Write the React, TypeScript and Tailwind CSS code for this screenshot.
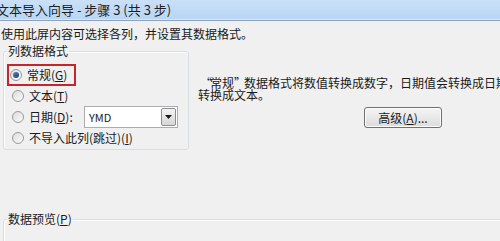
import React from "react";

function Radio({ checked }: { checked?: boolean }) {
  return (
    <span className="flex h-[12px] w-[12px] shrink-0 items-center justify-center rounded-full border border-[#9a9a9a] bg-gradient-to-br from-[#dcdcdc] to-[#fbfbfb]">
      {checked && (
        <span className="h-[6px] w-[6px] rounded-full bg-gradient-to-br from-[#5b86b8] to-[#1c3f6e]" />
      )}
    </span>
  );
}

export default function App() {
  return (
    <div
      className="h-[241px] w-[500px] overflow-hidden bg-[#f0f0f0] text-[12px] text-[#1a1a1a]"
      style={{ fontFamily: '"Noto Sans CJK SC", "Noto Sans", sans-serif' }}
    >
      {/* Title bar */}
      <div className="flex h-[21px] items-center border-b border-[#8ea2ba] bg-gradient-to-b from-[#c9e0f7] to-[#b9d6f5] shadow-[inset_0_-1px_0_#d8e6f3]">
        <span className="-ml-[4px] whitespace-nowrap text-[13px] leading-[16px] text-[#1e1e1e]">
          文本导入向导 - 步骤 3 (共 3 步)
        </span>
      </div>

      {/* Description */}
      <div className="mt-[5px] whitespace-nowrap pl-[1px] leading-[15px]">
        使用此屏内容可选择各列，并设置其数据格式。
      </div>

      <div className="mt-[3px] flex">
        {/* Column data format group */}
        <fieldset className="ml-[3px] w-[186px] shrink-0 rounded-[3px] border border-[#d5dfe5] pb-[1px] shadow-[inset_1px_1px_0_#ffffff]">
          <legend className="ml-[3px] px-[1px] leading-[14px]">列数据格式</legend>
          <div className="mt-[6px] flex flex-col">
            <div className="ml-[3px] flex h-[22px] w-[69px] items-center gap-[5px] border-2 border-[#c4262b] pl-[1px]">
              <Radio checked />
              <span className="whitespace-nowrap leading-[14px]">
                常规(<span className="underline">G</span>)
              </span>
            </div>
            <div className="flex h-[20px] items-center gap-[5px] pl-[8px]">
              <Radio />
              <span className="whitespace-nowrap leading-[14px]">
                文本(<span className="underline">T</span>)
              </span>
            </div>
            <div className="flex h-[22px] items-center pl-[8px]">
              <Radio />
              <span className="ml-[5px] w-[55px] whitespace-nowrap leading-[14px]">
                日期(<span className="underline">D</span>):
              </span>
              <div className="flex h-[22px] w-[94px] shrink-0 items-center border border-[#abadb3] bg-white">
                <span className="flex-1 pl-[4px] text-[11px] leading-[14px]">YMD</span>
                <span className="mr-[1px] flex h-[18px] w-[15px] items-center justify-center rounded-[2px] border border-[#8d8d8d] bg-gradient-to-b from-[#f4f4f4] to-[#d6d6d6]">
                  <svg width="7" height="4" viewBox="0 0 7 4">
                    <path d="M0 0 H7 L3.5 4 Z" fill="#1a1a1a" />
                  </svg>
                </span>
              </div>
            </div>
            <div className="flex h-[20px] items-center gap-[5px] pl-[8px]">
              <Radio />
              <span className="whitespace-nowrap leading-[14px]">
                不导入此列(跳过)(<span className="underline">I</span>)
              </span>
            </div>
          </div>
        </fieldset>

        {/* Description and advanced button */}
        <div className="ml-[11px] flex flex-col pt-[33px]">
          <div className="flex flex-col whitespace-nowrap leading-[12px]">
            <span>
              <span className="inline-block w-[10px] text-right">“</span>常规<span className="inline-block w-[10px] text-left">”</span>数据格式将数值转换成数字，日期值会转换成日期，其余数据则
            </span>
            <span className="-ml-[2px]">转换成文本。</span>
          </div>
          <button className="ml-[164px] mt-[6px] flex h-[21px] w-[78px] items-center justify-center rounded-[3px] border border-[#707070] bg-gradient-to-b from-[#f5f5f5] to-[#dcdcdc] text-[12px] leading-[14px] shadow-[inset_0_0_0_1px_#fcfcfc]">
            高级(<span className="underline">A</span>)...
          </button>
        </div>
      </div>

      {/* Data preview group */}
      <fieldset className="ml-[3px] mt-[62px] h-[60px] w-[520px] rounded-[3px] border border-[#d5dfe5] shadow-[inset_1px_1px_0_#ffffff]">
        <legend className="ml-[3px] px-[1px] leading-[14px]">
          数据预览(<span className="underline">P</span>)
        </legend>
      </fieldset>
    </div>
  );
}
